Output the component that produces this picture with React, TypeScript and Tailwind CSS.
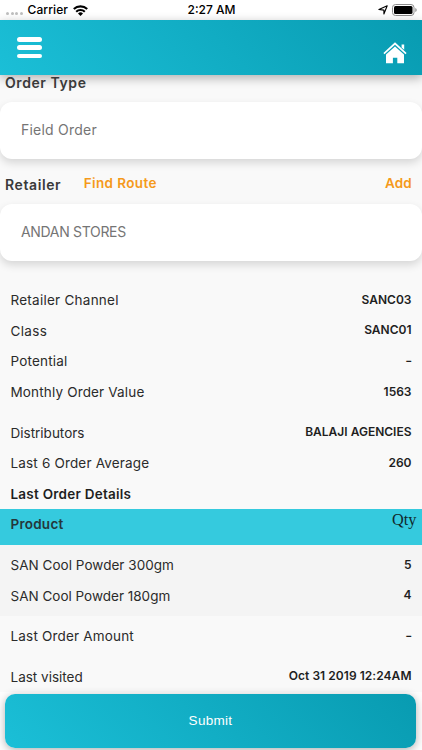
import React from 'react';

interface Detail {
  label: string;
  value: string;
  labelClass?: string;
  valueClass?: string;
}

const retailerDetails: Detail[] = [
  { label: 'Retailer Channel', value: 'SANC03', labelClass: 'tracking-[0.25px]' },
  { label: 'Class', value: 'SANC01', labelClass: 'tracking-[0.35px]' },
  { label: 'Potential', value: '-', labelClass: 'tracking-[0.18px]', valueClass: 'scale-x-125' },
  { label: 'Monthly Order Value', value: '1563', labelClass: 'tracking-[0.16px]' },
];

const orderDetails: Detail[] = [
  { label: 'Distributors', value: 'BALAJI AGENCIES' },
  { label: 'Last 6 Order Average', value: '260', labelClass: 'tracking-[0.17px]' },
];

const products: Detail[] = [
  { label: 'SAN Cool Powder 300gm', value: '5', labelClass: 'tracking-[0.03px]' },
  { label: 'SAN Cool Powder 180gm', value: '4' },
];

const DetailRow: React.FC<Detail> = ({ label, value, labelClass = '', valueClass = '' }) => (
  <div className="flex h-[30.6px] items-center justify-between pl-[10.5px] pr-[10.5px] whitespace-nowrap">
    <span className={`text-[13.5px] text-[#2b2b2b] ${labelClass}`}>{label}</span>
    <span className={`pb-[1px] text-[12px] font-semibold text-[#1f1f1f] ${valueClass}`}>{value}</span>
  </div>
);

const StatusBar = () => (
  <div className="grid h-5 grid-cols-3 items-center bg-white pl-[6px] pr-[5px] text-[12px] font-medium text-black">
    <div className="flex items-center">
      <div className="flex gap-[1.5px] pt-[7px]">
        {[0, 1, 2, 3].map(i => (
          <span key={i} className="h-[3px] w-[3px] rounded-full bg-[#bfbfbf]" />
        ))}
      </div>
      <span className="ml-[5px] tracking-[0.1px]">Carrier</span>
      <svg className="ml-[5px] h-[11px] w-[15px]" viewBox="0 0 15 11" fill="none" stroke="black" strokeWidth="2.1">
        <path d="M0.8 4.1a9.6 9.6 0 0 1 13.4 0" />
        <path d="M3.2 6.7a6.1 6.1 0 0 1 8.6 0" />
        <path d="M7.5 10.9 5 8.4a3.6 3.6 0 0 1 5 0z" fill="black" stroke="none" />
      </svg>
    </div>
    <span className="text-center">2:27 AM</span>
    <div className="flex items-center justify-end">
      <svg className="h-[10px] w-[10px]" viewBox="0 0 10 10" fill="none" stroke="black" strokeWidth="1.1" strokeLinejoin="round">
        <path d="M9.2 .8 5.9 9V5.1L.9 4.5z" />
      </svg>
      <svg className="ml-[4px] h-[12px] w-[25px]" viewBox="0 0 25 12">
        <rect x="0.5" y="0.5" width="21.5" height="11" rx="3" fill="none" stroke="#8c8c8c" />
        <rect x="2" y="2" width="18.5" height="8" rx="1.5" fill="black" />
        <path d="M23.3 4v4q1.4-.5 1.4-2t-1.4-2" fill="#8c8c8c" />
      </svg>
    </div>
  </div>
);

const Header = () => (
  <header className="flex h-[55px] justify-between bg-linear-[45deg,#1bbfd7,#089bb1] pl-[16.5px] pr-[15.5px] shadow-[0_3px_10px_rgba(0,0,0,0.3)]">
    <button className="mt-[17px] flex h-[21px] w-[25px] flex-col justify-between">
      <span className="h-[4.5px] w-full rounded-full bg-white" />
      <span className="h-[4.5px] w-full rounded-full bg-white" />
      <span className="h-[4.5px] w-full rounded-full bg-white" />
    </button>
    <svg className="mt-[22px] h-[22px] w-[24px]" viewBox="0 0 24 22" fill="white">
      <path d="M12 .3 23.6 11.1l-1.1 1.2L12 2.8 1.5 12.3.4 11.1z" />
      <path d="M18.6 2.6h2.6v5.2l-2.6-2.4z" />
      <path d="M12 4.5 21 12.6V21.3h-6.7v-5.6H9.9v5.6H3V12.6z" />
    </svg>
  </header>
);

const Field: React.FC<{ value: string; className?: string }> = ({ value, className = '' }) => (
  <div className="flex h-[57px] items-center rounded-[12px] bg-white pl-[21px] pb-[2px] shadow-[0_4px_8px_rgba(0,0,0,0.14)]">
    <span className={`text-[14px] text-[#757575] ${className}`}>{value}</span>
  </div>
);

const App: React.FC = () => {
  return (
    <div className="flex h-[750px] w-[422px] flex-col overflow-hidden bg-[#f9f9f9] font-['Inter',sans-serif]">
      <StatusBar />
      <Header />

      {/* order type */}
      <div className="h-[27px] pl-[5px] text-[14px] leading-[16px] font-semibold tracking-[0.58px] text-[#3a3a3a]">Order Type</div>
      <Field value="Field Order" className="tracking-[0.22px]" />

      {/* retailer */}
      <div className="flex h-[45px] items-center pl-[5px] pr-[10px] text-[13.5px] font-semibold text-[#f59a1b]">
        <span className="pt-[6px] text-[14px] tracking-[0.6px] text-[#3a3a3a]">Retailer</span>
        <span className="ml-[22.5px] pt-[3px] tracking-[0.38px]">Find Route</span>
        <span className="ml-auto pt-[3px] tracking-[0.2px]">Add</span>
      </div>
      <Field value="ANDAN STORES" className="tracking-[-0.32px]" />

      <div className="pt-[24px]">
        {retailerDetails.map(item => <DetailRow key={item.label} {...item} />)}
      </div>
      <div className="pt-[10px]">
        {orderDetails.map(item => <DetailRow key={item.label} {...item} />)}
      </div>

      {/* last order */}
      <div className="flex h-[30.8px] items-center pl-[10.5px] text-[13.5px] font-semibold tracking-[0.24px] text-[#1f1f1f]">
        <span>Last Order Details</span>
      </div>
      <div className="flex h-9 shrink-0 justify-between bg-[#35cade] pl-[10.5px] pr-[5.5px]">
        <span className="text-[13.5px] leading-[30px] font-semibold tracking-[0.24px] text-[#24373b]">Product</span>
        <span className="font-['Liberation_Serif',serif] text-[16.3px] leading-[22px] text-[#10282c]">Qty</span>
      </div>
      <div className="bg-[#f4f4f4] pt-[4.4px] pb-[5px]">
        {products.map(item => <DetailRow key={item.label} {...item} />)}
      </div>
      <div className="pt-[5px]">
        <DetailRow label="Last Order Amount" value="-" labelClass="tracking-[0.18px]" valueClass="scale-x-125" />
      </div>
      <div className="pt-[10px]">
        <DetailRow label="Last visited" value="Oct 31 2019 12:24AM" valueClass="tracking-[0.05px]" />
      </div>

      <div className="flex flex-1 bg-[#fdfdfd] pl-[5px] pr-[6px] pt-[1.4px] pb-[2px]">
        <button className="flex-1 rounded-[10px] bg-linear-[45deg,#1bbfd7,#089bb1] pt-[1px] font-['Liberation_Sans',sans-serif] text-[13.5px] tracking-[0.3px] text-white shadow-[0_2px_8px_rgba(0,0,0,0.3)]">
          Submit
        </button>
      </div>
    </div>
  );
};

export default App;
